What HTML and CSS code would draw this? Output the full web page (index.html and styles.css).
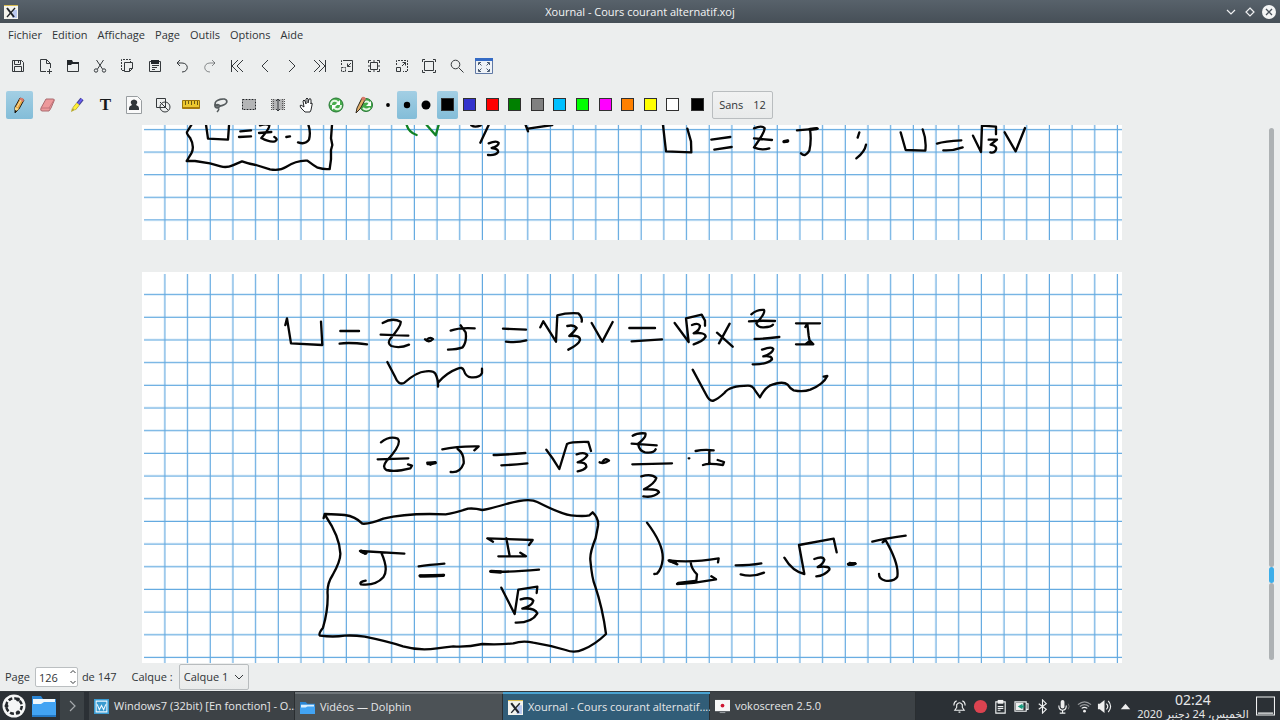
FILE: index.html
```html
<!DOCTYPE html>
<html lang="fr">
<head>
<meta charset="utf-8">
<title>Xournal - Cours courant alternatif.xoj</title>
<link rel="stylesheet" href="styles.css">
</head>
<body>
<div class="window">
<header class="titlebar">
  <svg class="app-icon" viewBox="0 0 14 14"><path fill="#f4f4ee" d="M0 0h14v14H0z"/><path fill="#d8bc50" d="M0 0h14v1H0z"/><path fill="#b9c8ef" d="M9 5h4v8H8z"/><path stroke="#20242b" stroke-width="2" d="M3 3l7 9"/><path stroke="#20242b" stroke-width="1.3" d="M11 3l-8 9"/></svg>
  <h1 class="title">Xournal - Cours courant alternatif.xoj</h1>
  <div class="window-controls">
    <button aria-label="Réduire"><svg viewBox="0 0 14 14"><path class="lt" d="M3 5l4 4 4-4"/></svg></button>
    <button aria-label="Agrandir"><svg viewBox="0 0 14 14"><path class="lt" d="M7 3l4 4-4 4-4-4z"/></svg></button>
    <button aria-label="Fermer"><svg viewBox="0 0 14 14"><circle cx="7" cy="7" r="7" fill="#f4f5f5"/><path stroke="#48515a" stroke-width="1.3" d="M4 4l6 6M10 4l-6 6"/></svg></button>
  </div>
</header>
<nav class="menubar">
  <button>Fichier</button><button>Edition</button><button>Affichage</button><button>Page</button><button>Outils</button><button>Options</button><button>Aide</button>
</nav>
<div class="toolbar main-tools">
  <button aria-label="Enregistrer"><svg viewBox="0 0 16 16"><path class="ln" d="M2.500 2.500h9l2 2v9h-11zM4.500 2.500v4h6v-4M8.500 3v2M4.500 13.500v-5h7v5"/></svg></button>
  <button aria-label="Nouveau"><svg viewBox="0 0 16 16"><path class="ln" d="M9 13.500H3.500v-12h6l4 4V10M9.500 1.500v4h4M12.500 11v5M10 13.500h5"/></svg></button>
  <button aria-label="Ouvrir"><svg viewBox="0 0 16 16"><path class="ln" d="M2.500 5.500h11v8h-11z"/><path fill="#22262a" d="M2 2h5l1 2h6v2H7L6 7H2z"/></svg></button>
  <button aria-label="Couper"><svg viewBox="0 0 16 16"><path class="ln" d="M4.500 2l6 9M11.500 2l-6 9"/><circle class="ln" cx="4" cy="12.500" r="1.700"/><circle class="ln" cx="12" cy="12.500" r="1.700"/></svg></button>
  <button aria-label="Copier"><svg viewBox="0 0 16 16"><path class="ln dash" d="M5 12.500H2.500v-11h9V4"/><path class="ln" d="M5.500 4.500h8v6l-3 3h-5zM13.500 10.500h-3v3"/></svg></button>
  <button aria-label="Coller"><svg viewBox="0 0 16 16"><path class="ln" d="M2.500 3.500h11v10h-11zM5 7.500h7M5 9.500h5M5 11.500h3"/><path fill="#22262a" d="M4 2h8v4H4z"/></svg></button>
  <button aria-label="Annuler"><svg viewBox="0 0 16 16"><path class="ln" d="M6 2L3 5l3 3M3 5h5c7 0 7 9 0 9"/></svg></button>
  <button aria-label="Rétablir"><svg viewBox="0 0 16 16"><path class="ln soft" d="M10 2l3 3-3 3M13 5H8c-7 0-7 9 0 9"/></svg></button>
  <button aria-label="Première page"><svg viewBox="0 0 16 16"><path class="ln" d="M2.500 2v12M9 2L3 8l6 6M14 2L8 8l6 6"/></svg></button>
  <button aria-label="Page précédente"><svg viewBox="0 0 16 16"><path class="ln" d="M11 2L5 8l6 6"/></svg></button>
  <button aria-label="Page suivante"><svg viewBox="0 0 16 16"><path class="ln" d="M5 2l6 6-6 6"/></svg></button>
  <button aria-label="Dernière page"><svg viewBox="0 0 16 16"><path class="ln" d="M13.500 2v12M2 2l6 6-6 6M7 2l6 6-6 6"/></svg></button>
  <button aria-label="Zoom arrière"><svg viewBox="0 0 16 16"><path class="ln dash" d="M2.500 7V2.500H6"/><path class="ln" d="M6 2.500h7.500v11H9M12 5L8.500 8.500M8.500 5.500v3h3"/><path class="ln dash" d="M2.500 9.500h4v4h-4z"/></svg></button>
  <button aria-label="Ajuster à la page"><svg viewBox="0 0 16 16"><path class="ln" d="M4.500 4.500h7v7h-7zM8 2v2M8 12v2M2 8h2M12 8h2M2.500 5V2.500H5M11 2.500h2.500V5M13.500 11v2.500H11M5 13.500H2.500V11"/></svg></button>
  <button aria-label="Zoom avant"><svg viewBox="0 0 16 16"><path class="ln dash" d="M2.500 7V2.500h11v11H9"/><path class="ln" d="M2.500 9.500h4v4h-4zM8 8l3.500-3.500M8.500 4.500h3v3"/></svg></button>
  <button aria-label="Zoom normal"><svg viewBox="0 0 16 16"><path class="ln" d="M3.500 3.500h9v9h-9z"/><path class="ln" d="M1.500 4V1.500H4M12 1.500h2.500V4M14.500 12v2.500H12M4 14.500H1.500V12"/></svg></button>
  <button aria-label="Loupe"><svg viewBox="0 0 16 16"><circle class="ln" cx="6.500" cy="6.500" r="4.300"/><path class="ln" d="M10 10l4.500 4.500"/></svg></button>
  <button aria-label="Plein écran"><svg class="wide" viewBox="0 0 18 16"><path fill="#eef2f7" stroke="#6079a5" d="M.5.5h17v15H.5z"/><path fill="#356bc5" d="M0 0h18v3H0z"/><path stroke="#4a5a70" fill="none" d="M6.500 7.500L4 5M3.500 7V4.500H6M11.500 7.500L14 5M12 4.500h2.500V7M6.500 10.500L4 13M3.500 11v2.500H6M11.500 10.500L14 13M12 13.500h2.500V11"/></svg></button>
</div>
<div class="toolbar drawing">
  <div class="tools">
    <button class="active" aria-label="Crayon"><svg viewBox="0 0 18 18"><path fill="#e9a943" stroke="#27231b" d="M5 11l5-9 4 2-5 9-4 4z"/><path fill="#f7d987" d="M5 11l4 2-4 3z"/><path fill="#d87968" d="M10 2q3-1 4 2l-1 2-4-2z"/><path stroke="#fbe1a4" d="M7 11l4-7"/><path fill="#17150f" d="M5 14l2 1-2 2z"/></svg></button>
    <button aria-label="Gomme"><svg viewBox="0 0 18 18"><path fill="#ed999b" stroke="#a96c70" d="M7 3h7q2 0 1 2l-3 7-2 3H3q-2 0-1-3z"/><path stroke="#c4747b" fill="none" d="M2 12h8l2 1M10 12l5-8"/></svg></button>
    <button aria-label="Surligneur"><svg viewBox="0 0 18 18"><path stroke="#444197" stroke-width="4" d="M10 8l4-5"/><path stroke="#6a5ff5" stroke-width="2" d="M10 8l4-5"/><path stroke="#9c8b22" stroke-width="4" d="M6 13l4-5"/><path stroke="#fff037" stroke-width="3" d="M6 13l4-5"/><path fill="#b8aa28" d="M4 12l3 2-4 2z"/></svg></button>
    <button class="letter" aria-label="Texte">T</button>
    <button aria-label="Image"><svg viewBox="0 0 18 18"><path fill="#fafafa" stroke="#989da0" d="M1.500.5h11l4 4v13h-15z"/><path fill="#303539" d="M4 14v-2q0-2 3-3-2-2-1-4 3-3 6 0 1 2-1 4 3 1 3 3v2z"/></svg></button>
    <button aria-label="Formes"><svg viewBox="0 0 18 18"><path class="ln" d="M2.500 2.500h9v9h-9z"/><circle class="ln" cx="11" cy="11" r="5"/><path class="ln" d="M6 6l8 8"/></svg></button>
    <button aria-label="Règle"><svg viewBox="0 0 18 18"><path fill="#edc82f" stroke="#9b750c" d="M.5 4.500h17v8H.5z"/><path stroke="#6d5a12" d="M3.500 5v4M6.500 5v3M9.500 5v4M12.500 5v3M15.500 5v4"/><path fill="#a87c0d" d="M1 11h16v2H1z"/></svg></button>
    <button aria-label="Lasso"><svg viewBox="0 0 18 18"><ellipse cx="10" cy="6.500" rx="6" ry="3.200" transform="rotate(-15 10 6.500)" fill="none" stroke="#555b5d" stroke-width="1.800"/><path stroke="#555b5d" stroke-width="1.500" fill="none" d="M4 8q-1 4 3 4 2 1-1 4M4 10q3-3 5 0-2 3-5 0"/></svg></button>
    <button aria-label="Sélection rectangulaire"><svg viewBox="0 0 18 18"><path fill="#b4b5b6" d="M2 3h14v11H2z"/><path fill="none" stroke="#eceeee" d="M2.500 3.500h13v10h-13z"/><path fill="none" stroke="#202326" stroke-dasharray="2 1" d="M2.500 3.500h13v10h-13z"/></svg></button>
    <button aria-label="Espace vertical"><svg viewBox="0 0 18 18"><path fill="#b4b5b6" d="M3 3h12v11H3z"/><path stroke="#555" stroke-dasharray="1 1" d="M2.500 3v11M4.500 3v11M13.500 3v11M15.500 3v11"/><path class="ln" d="M9 3v12M7 5l2-2 2 2M7 13l2 2 2-2"/></svg></button>
    <button aria-label="Main"><svg viewBox="0 0 18 18"><path fill="#fff" stroke="#252729" d="M8 16l-4-4q-2-3 0-3l3 2-1-6q1-2 2 0l1 3V3q1-2 2 0v4l1-4q2-1 2 1v4l0-1q2 0 1 2l-1 5-1 2z"/></svg></button>
    <button aria-label="Stylo par défaut"><svg viewBox="0 0 18 18"><circle cx="10" cy="9" r="7" fill="#48ad4c" stroke="#267835"/><path stroke="#e5f7e2" stroke-width="2" fill="none" d="M5 9q0-5 5-4l3 2M15 9q0 5-5 4l-3-2"/><path fill="#fff" d="M14 4v5H9zM6 14V9h5z"/></svg></button>
    <button aria-label="Crayon par défaut"><svg viewBox="0 0 18 18"><circle cx="11" cy="9" r="6.500" fill="#44aa4a" stroke="#287735"/><path stroke="#e7f8e6" stroke-width="2" fill="none" d="M9 6q5-2 6 3M15 12q-4 3-7 0"/><path fill="#fff" d="M16 5v5h-5z"/><path fill="#e3ae67" stroke="#30291f" d="M2 12L7 2l3 2-5 9-4 4z"/><path fill="#d87968" d="M7 1q3-1 4 2L9 5 6 3z"/></svg></button>
  </div>
  <div class="sizes"><button aria-label="Fin"><svg viewBox="0 0 14 14"><circle cx="7" cy="7" r="1.900"/></svg></button><button class="active" aria-label="Moyen"><svg viewBox="0 0 14 14"><circle cx="7" cy="7" r="3.200"/></svg></button><button aria-label="Épais"><svg viewBox="0 0 14 14"><circle cx="7" cy="7" r="4.500"/></svg></button></div>
  <div class="colors"><button class="active" aria-label="Noir"><i class="swatch black"></i></button><button aria-label="Bleu"><i class="swatch blue"></i></button><button aria-label="Rouge"><i class="swatch red"></i></button><button aria-label="Vert"><i class="swatch forest"></i></button><button aria-label="Gris"><i class="swatch gray"></i></button><button aria-label="Bleu clair"><i class="swatch cyan"></i></button><button aria-label="Vert clair"><i class="swatch lime"></i></button><button aria-label="Magenta"><i class="swatch magenta"></i></button><button aria-label="Orange"><i class="swatch orange"></i></button><button aria-label="Jaune"><i class="swatch yellow"></i></button><button aria-label="Blanc"><i class="swatch white"></i></button></div>
  <button class="picker" aria-label="Autre couleur"><i class="swatch black"></i></button>
  <button class="font-button"><span>Sans</span><span>12</span></button>
</div>
<main class="workspace">
 <div class="pages">
  <svg class="sheet" viewBox="142 125 980 115" role="img" aria-label="Page 125, U = Z·J ; U = √3 V">
   <defs><pattern id="grid-a" x="142.800" y="128.900" width="22.680" height="22.600" patternUnits="userSpaceOnUse"><path class="rule" d="M0 .6H23M22.080 0V23"/></pattern></defs>
   <path fill="#fff" d="M142 125h980v115H142z"/><path fill="url(#grid-a)" d="M144 125h978v115H144z"/>
   <g class="ink" transform="translate(140 120) scale(.33333)">
    <path d="M154 15L141 36Q139 41 150 53Q165 80 154 100L140 123H165L210 130L242 139Q260 144 278 136L306 124Q325 131 348 135L390 148Q420 153 438 141Q470 120 502 122Q520 136 533 143Q553 149 569 147L573 118V90L577 75L573 55L576 15"/>
    <path d="M198 14L204 56L264 59L267 17M301 34L333 31M297 51L333 49M360 16Q379 10 388 16Q389 25 364 54M357 39L394 36M364 54Q390 68 405 64Q416 58 403 51M439 51L450 49M505 14Q513 37 507 59Q496 75 474 67"/>
    <path class="green" d="M800 15Q806 37 830 45M860 15L887 46L896 15"/>
    <path d="M994 16Q1005 24 1022 16M1046 15L1021 68M1046 70Q1070 60 1076 69Q1076 78 1055 84Q1077 86 1074 97Q1066 107 1044 105M1157 15L1164 34M1164 26L1237 15"/>
   </g>
   <g class="ink" transform="translate(640 118) scale(.33333)">
    <path d="M69 21L78 100L154 103L153 70L142 32M214 65L271 57M223 95L275 87M342 31Q366 21 374 31Q374 44 342 88M342 61L396 66M343 89Q365 98 388 91M432 71L443 69M471 37L533 32M510 34Q515 67 508 98Q496 119 483 106M658 43L653 59M678 80Q674 102 649 121M782 43L797 96L856 98Q860 65 848 34M891 77Q914 69 964 67M910 97Q937 99 968 88M999 53L1023 102L1026 23L1068 26V49M1046 65L1071 65L1052 80Q1075 84 1066 99Q1061 106 1051 103M1094 43L1127 100L1155 30"/>
    <path class="bold" d="M432 71L443 69M510 34L530 32"/>
   </g>
  </svg>
  <svg class="sheet" viewBox="142 272 980 391" role="img" aria-label="Page 126, Z·J = √3·Z/3·I, J = I/√3, I = √3·J">
   <defs><pattern id="grid-b" x="142.800" y="272.500" width="22.680" height="22.680" patternUnits="userSpaceOnUse"><path class="rule" d="M0 22.080H23M22.080 0V23"/></pattern></defs>
   <path fill="#fff" d="M142 272h980v391H142z"/><path fill="url(#grid-b)" d="M144 274h978v389H144z"/>
   <g class="ink" transform="translate(270 290) scale(.33333)">
    <path d="M46 105L51 85L63 160L157 165L153 95M211 123L267 123M209 161Q235 156 291 163M338 99Q367 82 392 95Q395 106 361 146M332 134L415 137M361 146Q351 160 364 168Q390 176 417 164M465 148Q476 160 489 147Q481 139 469 150M542 122Q568 112 614 115M572 106L587 127Q591 155 578 172Q561 178 534 179M699 116L768 119M708 155Q742 159 769 151M811 112L820 94L858 155L862 76Q889 68 925 70Q938 82 935 95M892 108Q911 103 920 114Q911 127 898 138Q931 134 930 150Q927 163 895 179M965 99L997 155L1028 96M1078 114H1155M1085 154L1176 148"/>
    <path d="M352 216L376 262Q385 286 402 279Q440 245 467 244Q490 241 496 251Q505 268 504 290L504 278Q530 248 563 236Q577 230 581 240Q588 262 604 262Q629 264 636 249V236"/>
   </g>
   <g class="ink" transform="translate(620 290) scale(.33333)">
    <path d="M164 99L206 156L198 85L245 74L255 92V107M216 105Q235 97 240 107Q239 122 221 130Q256 126 257 140Q249 154 221 163M291 128L338 170M329 101L297 160M394 73Q411 58 432 60Q437 70 409 100M387 94Q415 91 465 93M409 100Q414 113 431 112Q455 111 459 104M404 147Q435 147 478 141M426 179Q456 168 460 177Q457 191 430 199Q456 196 456 208Q441 224 398 223M528 100H600M556 111L562 101L566 137L570 158M528 163H580L570 152L556 163"/>
    <path d="M218 239L259 315Q270 337 282 331Q295 326 313 309Q329 287 384 287Q398 287 405 301L420 322Q433 296 449 287Q488 271 503 284Q510 296 521 301Q550 307 571 299Q610 283 622 258L611 260"/>
   </g>
   <g class="ink" transform="translate(360 420) scale(.33333)">
    <path d="M63 67Q89 46 113 56Q128 70 82 121M53 118L145 115M80 122Q65 141 79 150Q106 157 151 145L156 137L144 133M202 128L227 129M211 134L226 127M247 88Q290 78 356 79L343 91M293 87Q313 101 311 130Q300 160 272 156M401 105Q430 105 496 99M424 136Q455 135 502 130M559 89Q578 113 598 147L621 72Q633 65 685 66L693 93M650 103Q676 95 682 106Q674 119 653 127Q680 126 679 141Q672 151 653 154M719 127Q732 133 747 122Q736 112 728 125M818 47Q832 38 856 40Q861 51 832 73M815 71L890 76M835 75Q838 92 855 97Q881 101 887 88M817 133L936 130M844 169Q875 160 889 174Q885 190 852 208Q895 206 897 217Q882 234 850 229M986 115H988M1007 93Q1031 88 1061 91M1048 94V129M1029 135Q1045 128 1089 135L1092 126L1073 120"/>
    <path class="bold" d="M204 131L225 128"/>
   </g>
   <g class="ink" transform="translate(310 490) scale(.33333)">
    <path d="M41 84L44 72Q86 73 104 75Q136 79 157 101Q179 103 220 86Q291 68 407 73Q430 70 474 56Q493 54 517 60Q542 56 589 42Q657 22 682 36Q755 73 783 76Q821 80 838 76L848 67Q867 85 864 108L857 144Q839 189 841 210Q846 266 855 287Q878 355 888 432Q854 465 820 478Q794 491 767 480Q719 466 670 458Q638 451 610 460Q564 465 517 462Q470 472 430 469Q403 472 381 475Q328 483 279 469Q233 454 164 440Q130 435 104 437Q70 442 30 437Q24 432 39 413Q54 362 53 315Q50 282 68 255Q92 212 91 190Q89 140 47 78"/>
    <path d="M165 191L150 183L283 191M214 188Q237 239 220 262Q197 288 153 283Q146 276 167 272M326 229Q356 225 403 221M329 257Q363 261 402 255M549 155L532 145L668 150L657 165M589 145L599 198M565 199H648L631 188M541 244Q579 248 687 239M574 293L614 372L625 299L682 290L680 309M632 328Q662 320 670 332Q667 347 637 356Q674 353 682 370Q666 399 617 398"/>
    <path class="bold" d="M331 258L400 256M543 244L572 246M154 184L168 189"/>
   </g>
   <g class="ink" transform="translate(630 510) scale(.33333)">
    <path d="M51 38Q102 105 98 149Q95 177 81 191L73 192M142 163L116 151Q184 159 266 145L264 157M182 156Q184 177 201 193L199 212M141 222Q202 219 258 208L244 199M317 166Q360 166 394 160M332 193Q367 203 402 188M463 143Q487 184 523 192L507 105L611 86L620 127M553 147Q579 137 583 149Q580 162 563 171Q602 167 598 179Q584 197 559 199M654 162Q662 168 677 161L659 159M727 95Q762 86 827 77M758 97L767 91Q808 162 802 200Q794 215 766 212Q747 207 747 192"/>
    <path class="bold" d="M145 220L196 214M120 153L136 157M656 163L674 161"/>
   </g>
  </svg>
 </div>
 <div class="scrollbar" role="scrollbar" aria-label="Défilement"><span></span></div>
</main>
<footer class="status">
  <label for="page">Page</label>
  <span class="spin"><input id="page" type="text" inputmode="numeric" value="126"><svg viewBox="0 0 8 16"><path class="ln" d="M1.500 4L4 1.500 6.500 4M1.500 12L4 14.500 6.500 12"/></svg></span>
  <span class="total">de 147</span>
  <label for="layer">Calque :</label>
  <span class="layer"><select id="layer"><option>Calque 1</option></select><svg viewBox="0 0 10 8"><path class="ln" d="M1 2l4 4 4-4"/></svg></span>
</footer>
</div>
<div class="taskbar">
  <button class="launcher" aria-label="Menu"><svg viewBox="0 0 24 24"><circle cx="12" cy="12" r="11.500" fill="#f5f6f6"/><circle cx="12" cy="12" r="7.500" fill="none" stroke="#24282c" stroke-width="3" stroke-dasharray="3.900 2"/><circle cx="12" cy="12" r="6.500" fill="#f5f6f6"/><circle cx="4.500" cy="12" r="2" fill="#24282c"/><circle cx="16" cy="5.500" r="2" fill="#24282c"/><circle cx="16" cy="18.500" r="2" fill="#24282c"/></svg></button>
  <button class="files" aria-label="Fichiers"><svg viewBox="0 0 24 22"><path fill="#2b86d5" d="M0 1h9l2 3h13v18H0z"/><path fill="#f0f7fc" d="M1 4h22v6H1z"/><path fill="#42a3f3" d="M0 9h9l3-2h12v15H0z"/><path fill="#2478c5" d="M0 20h24v2H0z"/></svg></button>
  <button class="more" aria-label="Plus"><svg viewBox="0 0 12 12"><path d="M4 1l5 5-5 5" fill="none" stroke="#a6aaad" stroke-width="1.200"/></svg></button>
  <div class="tasks">
    <button class="task"><svg viewBox="0 0 14 14"><path fill="#3a9bd1" d="M0 0h14v14H0z"/><path fill="none" stroke="#eef8ff" d="M2 2h10v10H2zM3 5l2 5 2-4 2 4 2-5"/></svg><span>Windows7 (32bit) [En fonction] - O...</span></button>
    <button class="task open"><svg viewBox="0 0 16 14"><path fill="#2a86d5" d="M0 1h6l2 2h8v11H0z"/><path fill="#d9efff" d="M1 4h14v4H1z"/><path fill="#42a4f4" d="M0 7h6l2-1h8v8H0z"/></svg><span>Vidéos — Dolphin</span></button>
    <button class="task current"><svg viewBox="0 0 14 14"><path fill="#f4f4ee" d="M0 0h14v14H0z"/><path fill="#d8bc50" d="M0 0h14v1H0z"/><path fill="#b9c8ef" d="M9 5h4v8H8z"/><path stroke="#20242b" stroke-width="2" d="M3 3l7 9"/><path stroke="#20242b" stroke-width="1.300" d="M11 3l-8 9"/></svg><span>Xournal - Cours courant alternatif....</span></button>
    <button class="task recorder"><svg viewBox="0 0 16 16"><path fill="#f7f7f7" d="M0 1h16v12H0z"/><circle cx="8" cy="7" r="2" fill="#ce1733"/><path fill="#a2a5a9" d="M5 14h6v1H5z"/></svg><span>vokoscreen 2.5.0</span></button>
  </div>
  <div class="tray">
    <button aria-label="Notifications"><svg viewBox="0 0 16 16"><path class="lt" d="M3 12h10l-2-3V6q-3-4-6 0v3zM7 14h2M2 7q0-4 3-5M14 7q0-4-3-5"/></svg></button>
    <button aria-label="Enregistrement"><svg viewBox="0 0 16 16"><circle cx="8" cy="8" r="7" fill="#dc4350"/></svg></button>
    <button aria-label="Presse-papiers"><svg viewBox="0 0 16 16"><path class="lt" d="M3 3h10v12H3zM5 8h6M5 10h6M5 12h3"/><path fill="#f3f3f3" d="M5 1h6v4H5z"/></svg></button>
    <button aria-label="Batterie"><svg viewBox="0 0 16 16"><path class="lt" d="M1 3h12v10H1zM13 5h2v6h-2"/><path fill="#eee" d="M2 4h8v8H2z"/><path fill="#1a9b7f" d="M4 8l5-3v2h2v2H9v2z"/></svg></button>
    <button aria-label="Bluetooth"><svg viewBox="0 0 16 16"><path class="lt" d="M4 5l8 6-4 4V1l4 4-8 6"/></svg></button>
    <button aria-label="Microphone"><svg viewBox="0 0 16 16"><rect x="5" y="1" width="4" height="9" rx="2" fill="#eee"/><path class="lt" d="M3 7q0 5 4 5t4-5M7 12v3M4 15h6"/><path stroke="#777" fill="none" d="M13 5q2 3 0 6"/></svg></button>
    <button aria-label="Wi-Fi"><svg viewBox="0 0 16 16"><path class="lt soft" d="M1 6q7-6 14 0M3 8q5-4 10 0"/><path class="lt" d="M5 10q3-2 6 0"/><circle cx="8" cy="13" r="1.500" fill="#eee"/></svg></button>
    <button aria-label="Volume"><svg viewBox="0 0 16 16"><path fill="#eee" d="M1 5h2l5-4v14l-5-4H1z"/><path class="lt" d="M10 5q3 3 0 6M12 2q5 6 0 12"/></svg></button>
    <button aria-label="Icônes masquées"><svg viewBox="0 0 16 16"><path fill="#eee" d="M3 11l5-6 5 6z"/></svg></button>
  </div>
  <div class="clock"><time>02:24</time><span dir="rtl" lang="ar">الخميس، 24 دجنبر 2020</span></div>
  <button class="desktop" aria-label="Afficher le bureau"><svg viewBox="0 0 20 20"><path class="lt" d="M.5.5h19v19H.5zM2 17.500h16"/></svg></button>
</div>
</body>
</html>
```
FILE: styles.css
```css
* { box-sizing: border-box; }
body { margin: 0; height: 100vh; display: flex; flex-direction: column; overflow: hidden; background: #eceeee; color: #303437; font-family: "Open Sans", "Noto Sans", "DejaVu Sans", sans-serif; font-size: 11px; line-height: 16px; }
button, input, select { font: inherit; color: inherit; }
button { padding: 0; border: 0; background: none; display: flex; align-items: center; justify-content: center; }
svg { display: block; flex: none; }
.window { flex: 1; min-height: 0; display: flex; flex-direction: column; }
.ln { fill: none; stroke: #35393c; stroke-width: 1; }
.lt { fill: none; stroke: #f0f1f2; stroke-width: 1.200; }
.soft { opacity: .55; }
.dash { stroke-dasharray: 2 1; }
.titlebar { height: 23px; display: grid; grid-template-columns: 64px 1fr 64px; align-items: center; padding: 0 4px; color: #f4f5f5; background: linear-gradient(#58626b, #464f57); }
.app-icon { width: 14px; height: 14px; }
.title { margin: 0; font-size: 11px; font-weight: 400; text-align: center; }
.window-controls { display: flex; gap: 5px; justify-content: flex-end; }
.window-controls svg { width: 14px; height: 14px; }
.menubar { height: 24px; display: flex; align-items: center; gap: 10px; padding: 0 8px; }
.toolbar { display: flex; align-items: center; }
.main-tools { height: 37px; width: 502px; display: grid; grid-template-columns: repeat(18, 1fr); padding: 0 4px; }
.main-tools svg { width: 16px; height: 16px; }
.main-tools .wide { width: 18px; }
.drawing { height: 41px; padding-left: 5px; }
.drawing button { height: 28px; }
.tools { width: 373px; display: grid; grid-template-columns: repeat(13, 1fr); }
.tools svg { width: 18px; height: 18px; }
.drawing .active { background: linear-gradient(#a3cfe4, #83bdd8); border-radius: 2px; }
.tools .active { margin: 0 1px; }
.tools .letter { font: bold 17px/20px "Liberation Serif", serif; color: #17191b; }
.sizes { width: 58px; display: grid; grid-template-columns: repeat(3, 1fr); }
.sizes svg { width: 14px; height: 14px; }
.colors { width: 248px; display: grid; grid-template-columns: repeat(11, 1fr); }
.colors .active { margin: 0 1px; }
.picker { width: 26px; }
.swatch { width: 13px; height: 13px; border: 1px solid #303030; background: #000; }
.blue { background: #3333cc; }
.red { background: #ff0000; }
.forest { background: #008000; }
.gray { background: #808080; }
.cyan { background: #00c0ff; }
.lime { background: #00ff00; }
.magenta { background: #ff00ff; }
.orange { background: #ff8000; }
.yellow { background: #ffff00; }
.white { background: #fff; }
.font-button { width: 61px; margin-left: 2px; gap: 10px; border: 1px solid #b9bdbf; border-radius: 2px; background: linear-gradient(#f1f2f2, #e8eaea); }
.workspace { flex: 1; min-height: 0; display: flex; overflow: hidden; }
.pages { flex: 1; min-width: 0; display: flex; flex-direction: column; align-items: center; gap: 32px; }
.sheet { width: 980px; }
.rule { fill: none; stroke: #62a9e0; stroke-width: 1.200; }
.ink { fill: none; stroke: #050505; stroke-width: 7; stroke-linecap: round; stroke-linejoin: round; }
.bold { stroke-width: 10; }
.green { stroke: #118225; }
.scrollbar { width: 16px; padding: 3px 6px 3px 5px; display: flex; flex-direction: column; }
.scrollbar::before, .scrollbar::after { content: ""; border-radius: 3px; background: #aeb2b4; }
.scrollbar::before { flex: 439; }
.scrollbar::after { flex: 77; }
.scrollbar span { height: 16px; border-radius: 3px; background: #3daee9; }
.status { height: 28px; display: flex; align-items: center; padding-left: 5px; }
.spin { height: 20px; width: 43px; margin-left: 5px; position: relative; }
.spin input { width: 100%; height: 100%; padding: 0 3px; border: 1px solid #bbbfc1; border-radius: 2px; background: #fff; }
.spin svg { width: 8px; height: 16px; position: absolute; right: 1px; top: 2px; }
.total { margin: 0 15px 0 4px; }
.layer { margin-left: 6px; position: relative; width: 70px; height: 26px; }
.layer select { width: 100%; height: 100%; padding: 0 4px; appearance: none; border: 1px solid #b8bcbe; border-radius: 2px; background: linear-gradient(#f1f2f2, #e9ebeb); }
.layer svg { width: 10px; height: 8px; position: absolute; right: 5px; top: 9px; pointer-events: none; }
.taskbar { height: 29px; display: flex; align-items: stretch; background: #2b3035; color: #e6e7e8; border-top: 1px solid #34393d; }
.launcher { width: 28px; }
.launcher svg { width: 24px; height: 24px; }
.files { width: 32px; }
.files svg { width: 24px; height: 22px; }
.more { width: 24px; background: #3c4246; }
.more svg { width: 12px; height: 12px; }
.tasks { flex: 1; max-width: 832px; min-width: 0; padding-left: 5px; display: grid; grid-template-columns: 206fr 208fr 207fr 206fr; }
.task { min-width: 0; padding: 0 0 0 5px; gap: 5px; justify-content: flex-start; font-size: 11px; background: #3d4246; box-shadow: inset -1px 0 #2a2e31; }
.task span { white-space: nowrap; }
.task svg { width: 15px; height: 15px; }
.task.open { background: #4c5256; border-top: 2px solid #70767a; }
.task.current { background: #315d78; border-top: 2px solid #4aa3d2; }
.tray { width: 187px; display: grid; grid-template-columns: repeat(9, 1fr); margin-left: auto; }
.tray svg { width: 15px; height: 15px; }
.clock { width: 114px; display: flex; flex-direction: column; align-items: center; justify-content: center; white-space: nowrap; font-family: "Noto Sans", "DejaVu Sans", sans-serif; }
.clock time { font-size: 14px; line-height: 15px; }
.clock span { font-size: 11px; line-height: 13px; }
.desktop { width: 30px; }
.desktop svg { width: 19px; height: 20px; }
```
